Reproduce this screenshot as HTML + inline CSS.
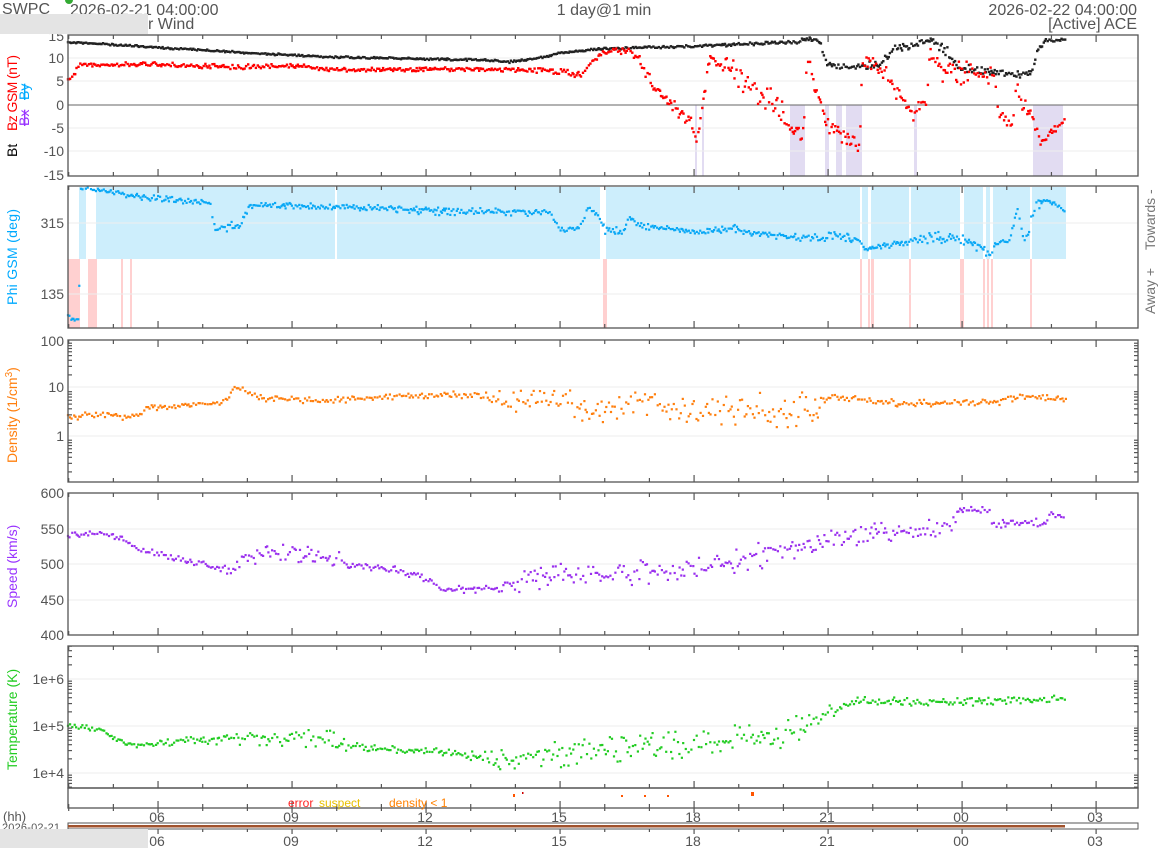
<!DOCTYPE html>
<html><head><meta charset="utf-8"><style>
html,body{margin:0;padding:0;background:#fff;width:1158px;height:848px;overflow:hidden}
svg{display:block;font-family:"Liberation Sans",sans-serif}
</style></head><body>
<svg id="s" width="1158" height="848" viewBox="0 0 1158 848" xmlns="http://www.w3.org/2000/svg">
<rect width="1158" height="848" fill="#fff"/>
<g id="bg"></g>
<g id="grid" stroke="#eee" stroke-width="1"></g>
<g id="data"></g>
<g id="frames" fill="none" stroke="#555" stroke-width="1.3"></g>
<g id="ticks" stroke="#555" stroke-width="1.2"></g>
<g fill="#555" font-size="14" text-anchor="end">
<text x="64" y="41">15</text><text x="64" y="63">10</text><text x="64" y="86">5</text><text x="64" y="110">0</text><text x="64" y="133">-5</text><text x="64" y="156">-10</text><text x="64" y="180">-15</text>
<text x="64" y="228">315</text><text x="64" y="299">135</text>
<text x="64" y="346">100</text><text x="64" y="392">10</text><text x="64" y="441">1</text>
<text x="64" y="498">600</text><text x="64" y="534">550</text><text x="64" y="569">500</text><text x="64" y="605">450</text><text x="64" y="640">400</text>
<text x="64" y="684">1e+6</text><text x="64" y="731">1e+5</text><text x="64" y="778">1e+4</text>
</g>
<g fill="#555" font-size="14" text-anchor="middle">
<text x="157" y="822">06</text><text x="291" y="822">09</text><text x="425" y="822">12</text><text x="559" y="822">15</text><text x="693" y="822">18</text><text x="827" y="822">21</text><text x="961" y="822">00</text><text x="1095" y="822">03</text>
<text x="157" y="846">06</text><text x="291" y="846">09</text><text x="425" y="846">12</text><text x="559" y="846">15</text><text x="693" y="846">18</text><text x="827" y="846">21</text><text x="961" y="846">00</text><text x="1095" y="846">03</text>
</g>
<text x="3" y="821" font-size="13" fill="#555">(hh)</text>
<text x="2" y="831" font-size="11" fill="#555" textLength="58">2026-02-21</text>
<rect x="68" y="823" width="1070" height="6" fill="none" stroke="#555" stroke-width="1"/>
<rect x="68" y="825" width="997" height="2.5" fill="#a0522d"/>
<g font-size="12"><text x="288" y="807" fill="#ff2222">error</text><text x="319" y="807" fill="#e8c000">suspect</text><text x="389" y="807" fill="#ff8000">density &lt; 1</text></g>
<g fill="#ff5500"><rect x="513" y="794" width="2" height="3"/><rect x="522" y="792" width="1.5" height="2" fill="#cc0000"/><rect x="621" y="795" width="2" height="2"/><rect x="644" y="795" width="2" height="2"/><rect x="667" y="795" width="2" height="2"/><rect x="751" y="792" width="3" height="4"/></g>
<text x="2" y="14" font-size="16" fill="#555">SWPC</text>
<circle cx="69" cy="0" r="4" fill="#33aa33"/>
<text x="70" y="15" font-size="16" fill="#555">2026-02-21 04:00:00</text>
<text x="148" y="29" font-size="16" fill="#555">r Wind</text>
<rect x="0" y="14" width="148" height="20" fill="#e4e4e4"/>
<rect x="0" y="829" width="148" height="19" fill="#e4e4e4"/>
<text x="604" y="15" font-size="16" fill="#555" text-anchor="middle">1 day@1 min</text>
<text x="1137" y="15" font-size="16" fill="#555" text-anchor="end">2026-02-22 04:00:00</text>
<text x="1137" y="29" font-size="16" fill="#555" text-anchor="end">[Active] ACE</text>
<g font-size="14">
<text transform="translate(17,157) rotate(-90)" fill="#000">Bt</text>
<text transform="translate(17,131) rotate(-90)" fill="#ff0000" textLength="76">Bz GSM (nT)</text>
<text transform="translate(29,126) rotate(-90)" fill="#9933ff" text-decoration="line-through">Bx</text>
<text transform="translate(29,100) rotate(-90)" fill="#00aaff" text-decoration="line-through">By</text>
<text transform="translate(17,305) rotate(-90)" fill="#00aaff" textLength="96">Phi GSM (deg)</text>
<text transform="translate(17,463) rotate(-90)" fill="#ff7f0e">Density (1/cm<tspan dy="-5" font-size="10">3</tspan><tspan dy="5">)</tspan></text>
<text transform="translate(17,608) rotate(-90)" fill="#9933ff">Speed (km/s)</text>
<text transform="translate(17,770) rotate(-90)" fill="#22cc22">Temperature (K)</text>
<text transform="translate(1155,250) rotate(-90)" fill="#777" font-size="14">Towards -</text>
<text transform="translate(1155,314) rotate(-90)" fill="#777" font-size="14">Away +</text>
</g>
</svg>
<script>
(function(){
function h(id,html){document.getElementById(id).insertAdjacentHTML('beforeend',html);}
var seed=12345;function r(){seed=(seed*1103515245+12345)%2147483648;return seed/2147483648;}
var L=68,R=1138;
var panels=[[35,176],[186,328],[340,482],[493,635],[646,788],[788,808]];
var fr="",tk="";
panels.forEach(function(p,i){
 fr+='<rect x="'+L+'" y="'+p[0]+'" width="'+(R-L)+'" height="'+(p[1]-p[0])+'"/>';
 for(var k=0;k<=24;k++){var x=L+0.7+k*44.67;if(x>R)break;var maj=((k+1)%3==0);var len=maj?7:4;
  if(i<5){tk+='<line x1="'+x+'" y1="'+p[0]+'" x2="'+x+'" y2="'+(p[0]+len)+'"/>';}
  tk+='<line x1="'+x+'" y1="'+p[1]+'" x2="'+x+'" y2="'+(p[1]-len)+'"/>';}
});
for(var k=0;k<=24;k++){var x=L+0.7+k*44.67;if(x>R)break;tk+='<line x1="'+x+'" y1="808" x2="'+x+'" y2="'+(((k+1)%3==0)?813:811)+'"/>';tk+='<line x1="'+x+'" y1="829" x2="'+x+'" y2="'+(((k+1)%3==0)?834:832)+'"/>';}
[[341,48.5,3,340,482],[632,47,4,646,788]].forEach(function(a){for(var d=-1;d<a[2];d++)for(var m=2;m<=9;m++){var y=a[0]+(d+1)*a[1]-Math.log10(m)*a[1];if(y>a[3]&&y<a[4]){tk+='<line x1="'+L+'" y1="'+y+'" x2="'+(L+4)+'" y2="'+y+'"/><line x1="'+R+'" y1="'+y+'" x2="'+(R-4)+'" y2="'+y+'"/>';}}});
h('frames',fr);h('ticks',tk);
var g="";[58,81,128,151,223,294,387,436,529,564,600,679,726,773].forEach(function(y){g+='<line x1="'+L+'" y1="'+y+'" x2="'+R+'" y2="'+y+'"/>';});
h('grid',g);
h('data','<line x1="'+L+'" y1="105" x2="'+R+'" y2="105" stroke="#666" stroke-width="1"/>');
var bg='<rect x="79" y="187" width="987" height="72" fill="#cdeefc"/>';
[[86,96],[335,337],[600,606],[860,862],[868,871],[909,911],[960,964],[983,986],[990,993],[1030,1032]].forEach(function(a){bg+='<rect x="'+a[0]+'" y="187" width="'+(a[1]-a[0])+'" height="72" fill="#fff"/>';});
[[68,80],[88,97],[121,123],[130,132],[603,607],[860,862],[868,870],[871,874],[909,911],[960,964],[983,985],[987,989],[991,993],[1030,1032]].forEach(function(a){bg+='<rect x="'+a[0]+'" y="259" width="'+(a[1]-a[0])+'" height="69" fill="#ffd0d0"/>';});
[[695,697],[702,704],[790,805],[825,829],[836,842],[846,862],[914,917],[1033,1063]].forEach(function(a){bg+='<rect x="'+a[0]+'" y="105" width="'+(a[1]-a[0])+'" height="71" fill="#e2dcf2"/>';});
h('bg',bg);
function interp(c,x){for(var i=0;i<c.length-1;i++){if(x<=c[i+1][0]){var f=(x-c[i][0])/(c[i+1][0]-c[i][0]||1);return [c[i][1]+f*(c[i+1][1]-c[i][1]),c[i][2]+f*(c[i+1][2]-c[i][2])];}}var l=c[c.length-1];return[l[1],l[2]];}
function series(c,col,step,sz,x0,x1,ylim){var s="";for(var x=x0;x<=x1;x+=step*(0.6+r()*0.8)){var v=interp(c,x);var y=v[0]+(r()-0.5)*2*v[1]*(r()<0.5?r():1);if(ylim&&(y<ylim[0]||y>ylim[1]))continue;s+='<rect x="'+(x-sz/2).toFixed(1)+'" y="'+(y-sz/2).toFixed(1)+'" width="'+sz+'" height="'+sz+'"/>';}h('data','<g fill="'+col+'">'+s+'</g>');}
var bt=[[68,42,1],[150,47,1],[250,53,1],[330,57,1],[480,60,1],[510,62,1.5],[540,58,1],[560,53,1],[600,49,1],[700,46,1.5],[800,42,1.5],[803,38,2],[820,40,3],[825,62,5],[835,67,4],[880,65,4],[893,50,4],[933,40,4],[950,55,6],[960,70,4],[970,68,4],[1000,72,4],[1030,75,4],[1040,45,4],[1047,40,1.5],[1066,40,1.5]];
var bz=[[68,82,3],[72,80,3],[78,65,2],[150,64,2],[220,67,3],[300,66,2],[330,70,2],[480,69,2],[560,71,3],[580,75,3],[603,52,2],[630,50,4],[640,60,6],[657,93,7],[670,103,7],[690,120,8],[697,140,6],[710,58,8],[730,70,12],[777,105,14],[790,128,10],[803,140,8],[807,55,10],[820,100,12],[827,125,10],[860,145,8],[862,60,6],[883,70,8],[913,115,10],[927,100,8],[930,50,6],[940,70,12],[993,75,14],[1000,115,8],[1013,125,6],[1015,90,10],[1033,118,8],[1040,143,4],[1063,122,3]];
series(bt,"#222",1.5,2.4,68,1066,[36,175]);
series(bz,"#ff0000",1.5,2.4,68,1066,[36,175]);
var phi=[[68,318,3],[79,320,2],[80,189,2],[86,188,2],[96,190,2],[120,193,2],[130,196,3],[210,203,3],[215,230,5],[240,225,5],[250,205,3],[350,207,3],[450,212,4],[550,212,4],[560,230,2],[580,228,3],[590,207,5],[598,215,4],[605,231,4],[625,230,4],[630,217,4],[640,226,3],[700,232,2],[735,228,4],[745,233,3],[800,237,4],[820,238,4],[835,235,4],[860,240,4],[865,250,3],[900,243,3],[935,237,6],[960,240,6],[980,247,6],[990,257,3],[995,245,4],[1010,240,4],[1017,210,8],[1025,240,6],[1035,210,8],[1043,198,3],[1066,212,2]];
series(phi,"#0aa8f5",1.5,2.2,68,1066,[187,327]);
var den=[[68,418,3],[100,414,4],[130,418,4],[150,408,3],[225,402,3],[235,387,3],[260,398,4],[330,400,4],[400,396,3],[480,394,4],[500,402,12],[570,402,12],[585,412,14],[620,410,14],[640,400,14],[680,408,14],[700,418,14],[720,410,18],[820,410,18],[830,396,3],[900,404,4],[960,402,3],[1000,402,4],[1020,396,4],[1066,400,3]];
series(den,"#ff7f0e",2,2.2,68,1066,[342,480]);
var spd=[[68,535,3],[100,534,3],[120,537,3],[135,548,3],[200,565,4],[230,570,5],[260,553,10],[330,558,10],[360,565,4],[420,575,5],[440,590,3],[500,588,5],[520,582,10],[560,575,12],[700,570,14],[760,555,14],[860,535,12],[950,527,8],[960,510,3],[990,510,3],[992,524,4],[1048,522,4],[1050,512,3],[1066,520,3]];
series(spd,"#9a30ee",2,2.2,68,1066,[494,634]);
var tmp=[[68,725,3],[100,729,3],[130,746,3],[200,740,4],[260,738,8],[330,740,10],[360,748,4],[440,752,4],[480,757,5],[500,760,10],[560,755,14],[700,745,16],[800,730,16],[830,712,8],[860,702,5],[960,702,4],[1066,699,4]];
series(tmp,"#22cc22",2,2.2,68,1066,[647,787]);
})();
</script>
</body></html>
